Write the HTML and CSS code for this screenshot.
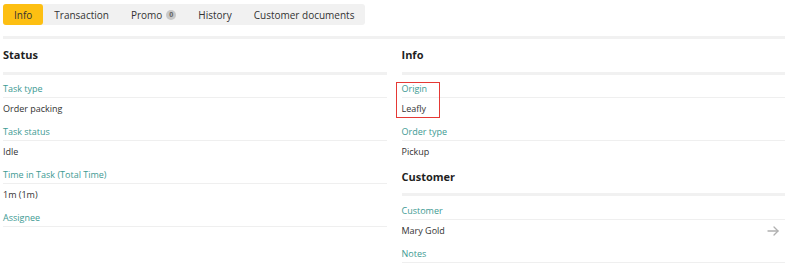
FILE: index.html
```html
<!DOCTYPE html>
<html lang="en">
<head>
    <meta charset="UTF-8">
    <title>Task details</title>
    <link rel="stylesheet" href="styles.css">
</head>
<body>
    <div class="page">
        <nav class="tabs">
            <a href="#" class="tab tab-active">Info</a>
            <a href="#" class="tab">Transaction</a>
            <a href="#" class="tab">Promo <span class="badge">0</span></a>
            <a href="#" class="tab">History</a>
            <a href="#" class="tab">Customer documents</a>
        </nav>
        <div class="tabs-rule"></div>

        <div class="columns">
            <div class="column">
                <h2 class="section-title">Status</h2>
                <div class="field">
                    <div class="field-label">Task type</div>
                    <div class="field-value">Order packing</div>
                </div>
                <div class="field">
                    <div class="field-label">Task status</div>
                    <div class="field-value">Idle</div>
                </div>
                <div class="field">
                    <div class="field-label">Time in Task (Total Time)</div>
                    <div class="field-value">1m (1m)</div>
                </div>
                <div class="field">
                    <div class="field-label">Assignee</div>
                </div>
            </div>

            <div class="column">
                <h2 class="section-title">Info</h2>
                <div class="field field-marked">
                    <div class="field-label">Origin</div>
                    <div class="field-value">Leafly</div>
                    <span class="marker"></span>
                </div>
                <div class="field">
                    <div class="field-label">Order type</div>
                    <div class="field-value">Pickup</div>
                </div>

                <h2 class="section-title section-title-next">Customer</h2>
                <div class="field">
                    <div class="field-label field-label-first">Customer</div>
                    <div class="field-value field-link">
                        Mary Gold
                        <svg class="arrow" width="12" height="10" viewBox="0 0 12 10" fill="none" stroke="currentColor" stroke-width="1.3" stroke-linecap="round" stroke-linejoin="round">
                            <line x1="1" y1="5" x2="11" y2="5"></line>
                            <polyline points="7 1 11 5 7 9"></polyline>
                        </svg>
                    </div>
                </div>
                <div class="field">
                    <div class="field-label">Notes</div>
                </div>
            </div>
        </div>
    </div>
</body>
</html>
```

FILE: styles.css
```css
:root {
    --accent: #fdbf12;
    --tab-bg: #f1f1f1;
    --label-color: #3d9a93;
    --text-color: #333333;
    --title-color: #1f1f1f;
    --rule-thick: #f1f1f1;
    --rule-thin: #efefef;
}

body {
    margin: 0;
    font-family: 'Open Sans', 'Liberation Sans', sans-serif;
    color: var(--text-color);
    background: #ffffff;
}

.page {
    padding: 4px 5px 0 3px;
}

.tabs {
    display: flex;
    width: fit-content;
    background: var(--tab-bg);
    border-radius: 3px;
}

.tab {
    display: flex;
    align-items: center;
    gap: 4px;
    height: 21px;
    padding: 0 11px;
    font-size: 10px;
    color: #333;
    text-decoration: none;
    border-radius: 3px;
}

.tab-active {
    background: var(--accent);
}

.badge {
    display: inline-flex;
    align-items: center;
    justify-content: center;
    width: 10px;
    height: 10px;
    border-radius: 50%;
    background: #c8c8c8;
    color: #666;
    font-size: 7px;
    line-height: 1;
    font-weight: 700;
}

.tabs-rule {
    height: 3px;
    margin-top: 11px;
    background: var(--rule-thick);
}

.columns {
    display: grid;
    grid-template-columns: 1fr 1fr;
    gap: 15px;
}

.section-title {
    margin: 0;
    padding: 10px 0 11px;
    font-size: 11px;
    line-height: 12px;
    font-weight: 700;
    color: var(--title-color);
    border-bottom: 3px solid var(--rule-thick);
}

.section-title-next {
    padding-bottom: 10px;
}

.field {
    position: relative;
}

.field-label {
    padding: 8px 0 3px;
    font-size: 9px;
    line-height: 11px;
    color: var(--label-color);
    border-bottom: 1px solid var(--rule-thin);
}

.field-label-first {
    padding-top: 9px;
}

.field-value {
    padding: 5px 0 4px;
    font-size: 9px;
    line-height: 11px;
    color: var(--text-color);
}

.field-link {
    display: flex;
    justify-content: space-between;
    align-items: center;
}

.arrow {
    color: #b0b0b0;
    margin-right: 6px;
}

.marker {
    position: absolute;
    left: -6px;
    top: 7px;
    width: 42px;
    height: 34px;
    border: 1px solid #e53935;
}
```
